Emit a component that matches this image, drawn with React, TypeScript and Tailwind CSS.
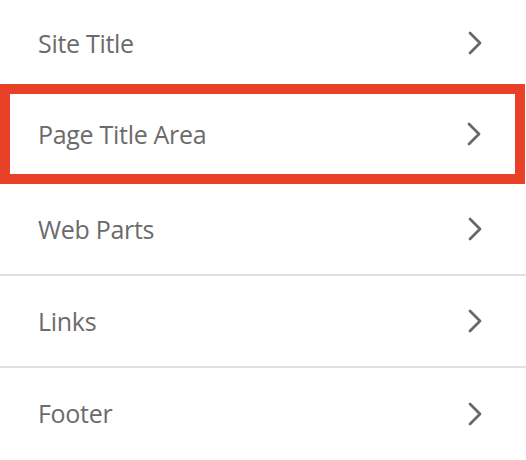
type NavItem = {
  label: string;
  active?: boolean;
  divider?: boolean;
};

const items: NavItem[] = [
  { label: "Site Title" },
  { label: "Page Title Area", active: true },
  { label: "Web Parts", divider: true },
  { label: "Links", divider: true },
  { label: "Footer" },
];

function Chevron() {
  return (
    <svg
      width="14"
      height="24"
      viewBox="0 0 14 24"
      fill="none"
      stroke="#686868"
      strokeWidth="2.8"
      strokeLinecap="round"
      strokeLinejoin="round"
      aria-hidden
    >
      <path d="M2 2 L12 12 L2 22" />
    </svg>
  );
}

export default function App() {
  return (
    <div
      className="h-[460px] w-[526px] overflow-hidden bg-white text-[#6b6b6b]"
      style={{ fontFamily: '"Open Sans", "Noto Sans", sans-serif' }}
    >
      <ul className="flex flex-col">
        {items.map((item, index) => {
          if (item.active) {
            return (
              <li
                key={item.label}
                className="mr-px flex h-[100px] items-center justify-between border-[10px] border-[#e94128] pl-[28px] pr-[34px]"
              >
                <span className="text-[25px] leading-none tracking-[-0.3px]">
                  {item.label}
                </span>
                <Chevron />
              </li>
            );
          }
          return (
            <li
              key={item.label}
              className={
                index === 0
                  ? "flex h-[84px] items-center justify-between pl-[38px] pr-[44px] pt-[2px]"
                  : item.divider
                    ? "flex h-[92px] items-center justify-between border-b-2 border-[#e1e1e1] pl-[38px] pr-[44px]"
                    : "flex h-[91px] items-center justify-between pl-[38px] pr-[44px]"
              }
            >
              <span className="text-[25px] leading-none tracking-[-0.3px]">
                {item.label}
              </span>
              <Chevron />
            </li>
          );
        })}
      </ul>
    </div>
  );
}
